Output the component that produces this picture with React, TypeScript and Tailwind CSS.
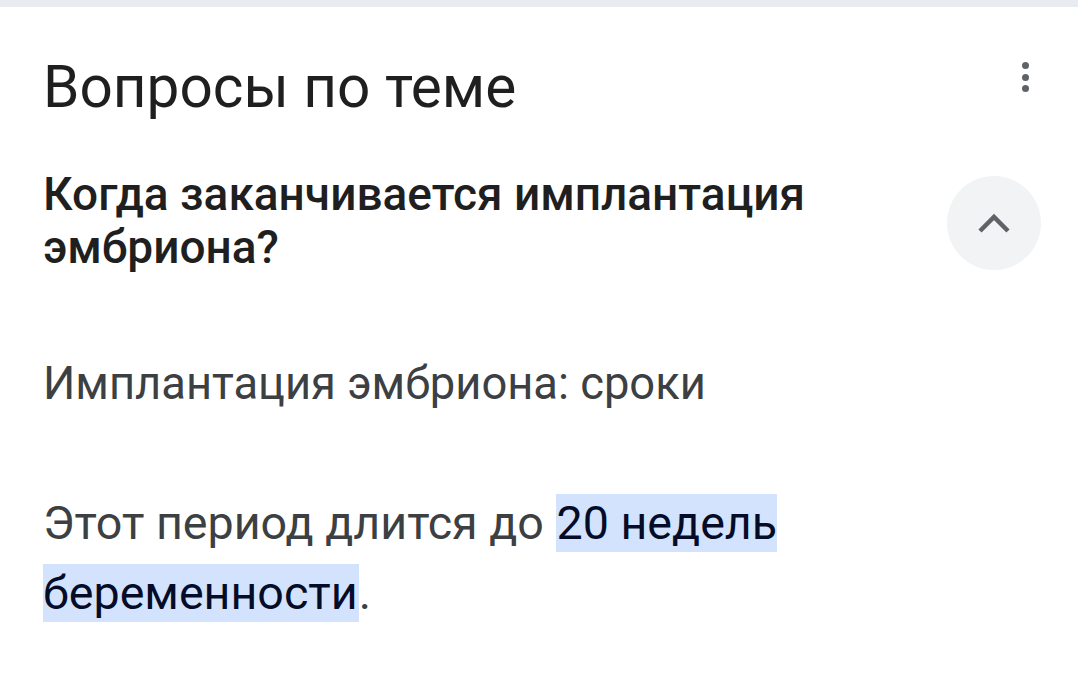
import React from 'react';

function App() {
  return (
    <div className="w-[1078px] h-[681px] bg-white overflow-hidden" style={{ fontFamily: 'Roboto, "Noto Sans", sans-serif' }}>
      <div className="h-[7px] bg-[#e8ebef]" />
      <div className="pl-[43px] pr-[38px]">
        <div className="flex justify-between items-start pt-[48px]">
          <h2 className="text-[58.5px] leading-[64px] text-[#1f1f1f]">Вопросы по теме</h2>
          <button className="mt-[7px] mr-[8px] flex flex-col gap-[4.7px] items-center w-[14px]">
            <span className="w-[7px] h-[7px] rounded-full bg-[#5f6368]" />
            <span className="w-[7px] h-[7px] rounded-full bg-[#5f6368]" />
            <span className="w-[7px] h-[7px] rounded-full bg-[#5f6368]" />
          </button>
        </div>
        <div className="flex justify-between items-start mt-[49px]">
          <div className="text-[46px] leading-[53px] font-medium text-[#1f1f1f] w-[820px]">
            Когда заканчивается имплантация эмбриона?
          </div>
          <button className="mt-[8px] mr-[-1px] w-[94px] h-[94px] rounded-full bg-[#f1f3f4] flex items-center justify-center">
            <svg width="34" height="22" viewBox="0 0 34 22" fill="none" stroke="#5f6368" strokeWidth="4.5">
              <path d="M3 19 17 5l14 14" />
            </svg>
          </button>
        </div>
        <p className="mt-[83px] text-[45.3px] leading-[53px] text-[#3c4043]">Имплантация эмбриона: сроки</p>
        <p className="mt-[78px] text-[46.6px] leading-[70px] text-[#3c4043] w-[800px]">
          Этот период длится до{' '}
          <mark className="bg-[#d3e3fd] text-[#040c28] px-[1px] py-[2px]">20 недель беременности</mark>.
        </p>
      </div>
    </div>
  );
}

export default App;
